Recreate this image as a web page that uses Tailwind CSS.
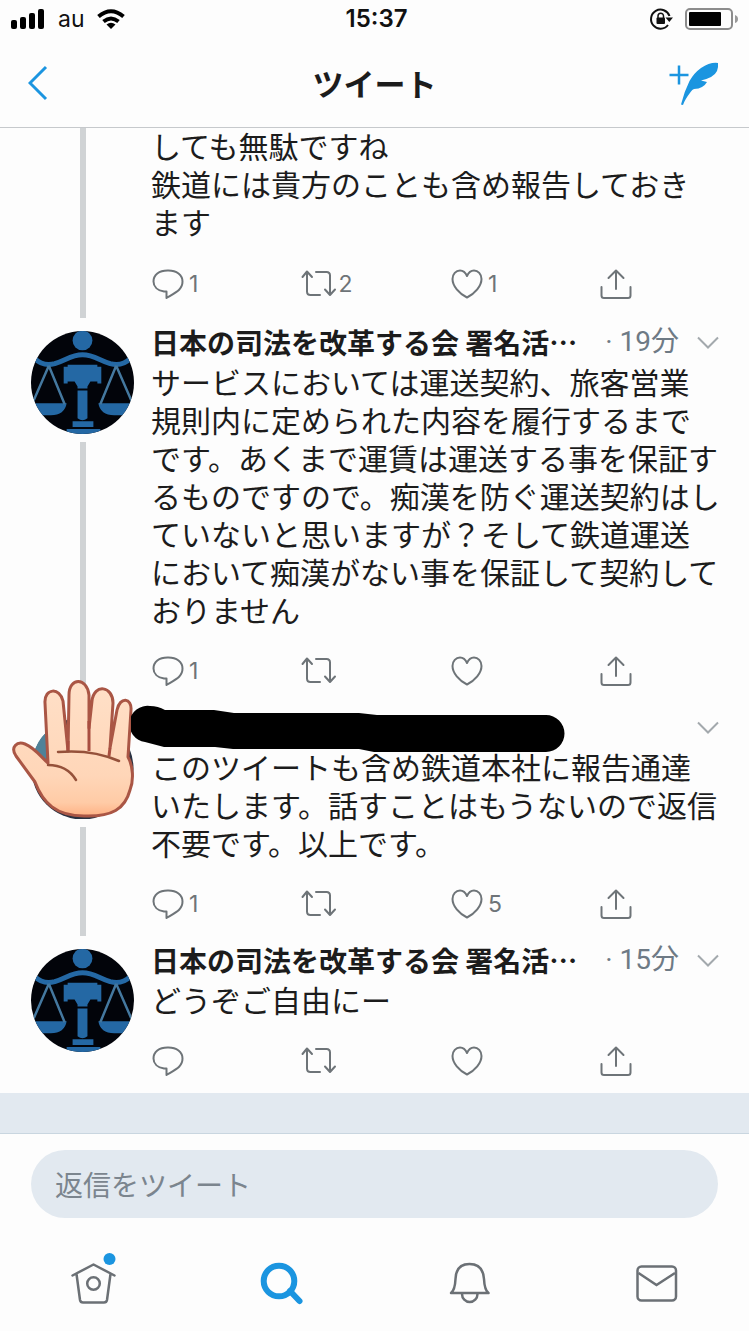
<!DOCTYPE html>
<html lang="ja">
<head>
<meta charset="utf-8">
<meta name="viewport" content="width=device-width, initial-scale=1">
<title>ツイート</title>
<script src="https://cdn.jsdelivr.net/npm/@tailwindcss/browser@4"></script>
</head>
<body class="flex min-h-screen flex-col bg-[#fdfdfd] font-['Noto_Sans_CJK_JP',sans-serif] text-[#1c1c1c]">

<!-- Shared symbols -->
<svg class="hidden" aria-hidden="true">
  <symbol id="reply" viewBox="0 0 36 32"><path d="M13 23.500C6.500 22.500 2.500 18.500 2.500 13.500 2.500 7 8 2.500 16.500 2.500h1C25.500 2.500 31.500 7 31.500 13.500c0 8-6 10.500-16 16.500v-6.500z" fill="none" stroke="currentColor" stroke-width="2" stroke-linejoin="round"/></symbol>
  <symbol id="retweet" viewBox="0 0 36 32"><path d="M1.500 9 6 3.500l5 5.500M6 4V23.500q0 3.500 3.500 3.500H19M15 4h10.500q3.500 0 3.500 3.500v19M24 21.500l5 5.500 5-5.500" fill="none" stroke="currentColor" stroke-width="2" stroke-linecap="round" stroke-linejoin="round"/></symbol>
  <symbol id="like" viewBox="0 0 36 32"><path d="M17 29.500C9 25.500 2.500 18 2.500 11 2.500 6 6 2.500 10 2.500c3 0 5.500 2 7 5.500C18.500 4.500 21 2.500 24 2.500c4 0 7.500 3.500 7.500 8.500C31.500 18 25 25.500 17 29.500z" fill="none" stroke="currentColor" stroke-width="2" stroke-linejoin="round"/></symbol>
  <symbol id="share" viewBox="0 0 36 32"><path d="M1.500 19V27.500q0 2.500 2.500 2.500h24q2.500 0 2.500-2.500V19M16 21V2.500M8.500 10 16 2.500l7.500 7.500" fill="none" stroke="currentColor" stroke-width="2" stroke-linecap="round" stroke-linejoin="round"/></symbol>
  <symbol id="chevron" viewBox="0 0 22 14"><path d="M1 2.500l10 10 10-10" fill="none" stroke="currentColor" stroke-width="2"/></symbol>
  <symbol id="scales" viewBox="0 0 104 104">
    <rect width="104" height="104" fill="#02040a"/>
    <g fill="#2468a4">
      <circle cx="52" cy="9.500" r="10"/>
      <path d="M33 36h4v-2h30v2h4v17h-4v-2h-7l-3 5v2H47v-2l-3-5h-7v2h-4zM47 60h10v28q-5 4-10 0zM42 91h21v6H42zM36 99h34v5H36z"/>
      <path d="M0 73h36q-2 12-16 12H0zM68 73h36v12H84q-14 0-16-12z"/>
    </g>
    <path d="M4 28q8 8 20 5c12-4 17-9 28-9s16 5 28 9q12 3 20-5" fill="none" stroke="#2468a4" stroke-width="5"/>
    <path d="M18 35 1 74M18 35l16 39M86 35 70 74M86 35l17 39" fill="none" stroke="#44789f" stroke-width="2.500"/>
  </symbol>
</svg>

<header class="border-b border-[#c6c9cc]">
  <div class="grid h-[38px] grid-cols-3 items-center px-3 font-[Inter,sans-serif] text-[23px] text-[#111]">
    <div class="flex items-center gap-3">
      <svg class="h-5 w-[34px] overflow-visible" viewBox="0 0 34 20" fill="#000"><rect x="-1" y="11" width="6" height="9" rx="2"/><rect x="8" y="8" width="6" height="12" rx="2"/><rect x="17" y="4" width="6" height="16" rx="2"/><rect x="26" y="0" width="6" height="20" rx="2"/></svg>
      <span>au</span>
      <svg class="h-5 w-7" viewBox="0 0 28 20" fill="none" stroke="#000" stroke-width="4"><path d="M1.500 7.500q12.500-10.500 25 0M6.500 12.500q7.500-6 15 0"/><path d="M9.500 15.500q4.500-3.500 9 0L14 20z" fill="#000" stroke="none"/></svg>
    </div>
    <time class="pl-1 text-center text-[24px] font-semibold">15:37</time>
    <div class="-mr-0.5 flex items-center justify-end gap-3">
      <svg class="h-6 w-6" viewBox="0 0 24 24"><path d="M19 18A9.500 9.500 0 1 1 20.500 9" fill="none" stroke="#111" stroke-width="2"/><path d="M16.500 10.500H24l-3.700 4.500z" fill="#111"/><rect x="7.500" y="10.500" width="8.500" height="6.500" rx="1" fill="#111"/><path d="M9 12V9a2.700 2.700 0 0 1 5.500 0V12" fill="none" stroke="#111" stroke-width="1.500"/></svg>
      <svg class="h-6 w-[54px]" viewBox="0 0 54 24"><rect x="1" y="2" width="46" height="20" rx="4" fill="none" stroke="#8c8c8c" stroke-width="2"/><rect x="4" y="5" width="32" height="14" rx="1"/><path d="M50 8q3 1 3 4t-3 4z" fill="#999"/></svg>
    </div>
  </div>
  <div class="grid h-[89px] grid-cols-[1fr_auto_1fr] items-center px-7 text-[#1b95e0]">
    <button type="button" aria-label="戻る" class="w-6"><svg class="h-9 w-5" viewBox="0 0 20 36" fill="none" stroke="currentColor" stroke-width="3"><path d="M18 2 2 18l16 16"/></svg></button>
    <h1 class="text-[31px] font-bold leading-10 text-[#1c1c1c]">ツイート</h1>
    <button type="button" aria-label="ツイートする" class="justify-self-end"><svg class="h-11 w-[52px]" viewBox="0 0 52 44"><path d="M10 4.500v19M.5 14h19" stroke="currentColor" stroke-width="2.500"/><path d="M49 2Q41 1 32 7 25 12 20.500 20 15 31 12 43.500l2 .5q1.500-5 8-13.500 1-2 3-2.500 5 0 8-2 3-1.500 5-5l-6-1.500q13-3 16-9.500 1.500-4 1-8z" fill="currentColor"/></svg></button>
  </div>
</header>

<main class="text-[30px] leading-[38px]">

  <article class="flex gap-[17px] pl-[31px]">
    <div class="flex w-[103px] shrink-0 justify-center"><div class="w-1.5 bg-[#d0d3d5]"></div></div>
    <div class="min-w-0 flex-1 pb-[18px]">
      <p class="-mt-0.5 pr-7">しても無駄ですね<br>鉄道には貴方のことも含め報告しておき<br>ます</p>
      <div class="mt-7 grid h-8 grid-cols-4 items-center font-[Inter,sans-serif] text-[23px] leading-8 text-[#6e7478]">
        <button type="button" aria-label="返信" class="flex items-center gap-0.5"><svg class="h-8 w-9"><use href="#reply"/></svg>1</button>
        <button type="button" aria-label="リツイート" class="flex items-center gap-0.5"><svg class="h-8 w-9"><use href="#retweet"/></svg>2</button>
        <button type="button" aria-label="いいね" class="flex items-center gap-0.5"><svg class="h-8 w-9"><use href="#like"/></svg>1</button>
        <button type="button" aria-label="共有" class="flex"><svg class="h-8 w-9"><use href="#share"/></svg></button>
      </div>
    </div>
  </article>

  <article class="flex gap-[17px] pl-[31px]">
    <div class="flex w-[103px] shrink-0 flex-col items-center gap-2 pt-[13px]">
      <svg class="h-[103px] w-[103px] rounded-full" role="img" aria-label="天秤のアイコン"><use href="#scales"/></svg>
      <div class="w-1.5 flex-1 bg-[#d0d3d5]"></div>
    </div>
    <div class="min-w-0 flex-1 pt-1 pb-4">
      <div class="flex h-10 items-center pr-[30px] text-[28px]">
        <h2 class="min-w-0 truncate font-bold">日本の司法を改革する会 署名活…</h2>
        <span class="ml-auto flex shrink-0 items-center font-[Roboto,'Noto_Sans_CJK_JP',sans-serif] text-[#6e7a85]"><time>· 19分</time><button type="button" aria-label="メニュー" class="ml-[18px] text-[#a3a9ad]"><svg class="h-3.5 w-[22px]"><use href="#chevron"/></svg></button></span>
      </div>
      <p class="pr-7">サービスにおいては運送契約、旅客営業<br>規則内に定められた内容を履行するまで<br>です。あくまで運賃は運送する事を保証す<br>るものですので。痴漢を防ぐ運送契約はし<br>ていないと思いますが？そして鉄道運送<br>において痴漢がない事を保証して契約して<br>おりません</p>
      <div class="mt-[27px] grid h-8 grid-cols-4 items-center font-[Inter,sans-serif] text-[23px] leading-8 text-[#6e7478]">
        <button type="button" aria-label="返信" class="flex items-center gap-0.5"><svg class="h-8 w-9"><use href="#reply"/></svg>1</button>
        <button type="button" aria-label="リツイート" class="flex"><svg class="h-8 w-9"><use href="#retweet"/></svg></button>
        <button type="button" aria-label="いいね" class="flex"><svg class="h-8 w-9"><use href="#like"/></svg></button>
        <button type="button" aria-label="共有" class="flex"><svg class="h-8 w-9"><use href="#share"/></svg></button>
      </div>
    </div>
  </article>

  <article class="flex gap-[17px] pl-[31px]">
    <div class="relative flex w-[103px] shrink-0 flex-col items-center gap-2 pt-[13px]">
      <svg class="h-[103px] w-[103px]" viewBox="0 0 104 104"><circle cx="52" cy="53" r="51.500" fill="#2b3242"/><path d="M2 40q4-15 14-24v40z" fill="#4f8299"/></svg>
      <div class="w-1.5 flex-1 bg-[#d0d3d5]"></div>
      <!-- Hand sticker over the avatar -->
      <svg class="absolute -top-8 -left-[31px] h-40 w-[150px]" viewBox="0 0 150 160" role="img" aria-label="手のひら">
        <defs><linearGradient id="skin" x1="0" y1="0" x2="0" y2="1"><stop offset="0" stop-color="#ffe0c8"/><stop offset=".7" stop-color="#ffd6b8"/><stop offset=".9" stop-color="#ffcba6"/><stop offset="1" stop-color="#ffb184"/></linearGradient></defs>
        <path d="M48 92 45 32C44 17 60 16 63 30l5 50 1-56C69 6 87 6 89 24v33L92 30C94 12 113 15 113 32l-3 45 7-38c3-14 15-12 14 0l-3 47c5 9 6 23 2 33-5 19-18 27-46 26-28 0-41-13-49-34L16 85C10 76 17 70 25 73 35 77 41 86 48 92z" fill="url(#skin)" stroke="#aa5645" stroke-width="3" stroke-linejoin="round"/>
        <path d="M89 50v30M110 77l-1 8M68 70v11" fill="none" stroke="#a94e40" stroke-width="3"/>
        <path d="M58 81q34-3 61 9M48 94q19 0 28 15" fill="none" stroke="#95513a" stroke-width="2.500" stroke-linecap="round"/>
      </svg>
    </div>
    <div class="min-w-0 flex-1 pt-1 pb-4">
      <div class="relative flex h-10 items-center justify-end pr-[30px]">
        <button type="button" aria-label="メニュー" class="flex text-[#a3a9ad]"><svg class="h-3.5 w-[22px]"><use href="#chevron"/></svg></button>
        <!-- Redacted account name -->
        <svg class="absolute -top-0.5 -left-5 h-12 w-[434px]" viewBox="0 0 434 48" aria-hidden="true"><path d="M19 1q8 0 15 4h49l20 3h125l18 2h169a18 18 0 0 1 0 37H243l-15-3H102l-18-2H33L14 37A18 18 0 0 1 19 1z"/></svg>
      </div>
      <p class="pr-7">このツイートも含め鉄道本社に報告通達<br>いたします。話すことはもうないので返信<br>不要です。以上です。</p>
      <div class="mt-[27px] grid h-8 grid-cols-4 items-center font-[Inter,sans-serif] text-[23px] leading-8 text-[#6e7478]">
        <button type="button" aria-label="返信" class="flex items-center gap-0.5"><svg class="h-8 w-9"><use href="#reply"/></svg>1</button>
        <button type="button" aria-label="リツイート" class="flex"><svg class="h-8 w-9"><use href="#retweet"/></svg></button>
        <button type="button" aria-label="いいね" class="flex items-center gap-0.5"><svg class="h-8 w-9"><use href="#like"/></svg>5</button>
        <button type="button" aria-label="共有" class="flex"><svg class="h-8 w-9"><use href="#share"/></svg></button>
      </div>
    </div>
  </article>

  <article class="flex gap-[17px] pl-[31px]">
    <div class="flex w-[103px] shrink-0 flex-col items-center pt-[13px]">
      <svg class="h-[103px] w-[103px] rounded-full" role="img" aria-label="天秤のアイコン"><use href="#scales"/></svg>
    </div>
    <div class="min-w-0 flex-1 pt-1 pb-4">
      <div class="flex h-10 items-center pr-[30px] text-[28px]">
        <h2 class="min-w-0 truncate font-bold">日本の司法を改革する会 署名活…</h2>
        <span class="ml-auto flex shrink-0 items-center font-[Roboto,'Noto_Sans_CJK_JP',sans-serif] text-[#6e7a85]"><time>· 15分</time><button type="button" aria-label="メニュー" class="ml-[18px] text-[#a3a9ad]"><svg class="h-3.5 w-[22px]"><use href="#chevron"/></svg></button></span>
      </div>
      <p class="pr-7">どうぞご自由にー</p>
      <div class="mt-[27px] grid h-8 grid-cols-4 items-center text-[#6e7478]">
        <button type="button" aria-label="返信" class="flex"><svg class="h-8 w-9"><use href="#reply"/></svg></button>
        <button type="button" aria-label="リツイート" class="flex"><svg class="h-8 w-9"><use href="#retweet"/></svg></button>
        <button type="button" aria-label="いいね" class="flex"><svg class="h-8 w-9"><use href="#like"/></svg></button>
        <button type="button" aria-label="共有" class="flex"><svg class="h-8 w-9"><use href="#share"/></svg></button>
      </div>
    </div>
  </article>
</main>

<div class="min-h-10 flex-1 border-b border-[#c9d6e0] bg-[#e2e9f0]"></div>

<footer>
  <div class="px-[31px] pt-4">
    <input type="text" aria-label="返信をツイート" placeholder="返信をツイート" class="block h-[68px] w-full rounded-full bg-[#e2e9f0] px-6 text-[28px] placeholder:text-[#7b858e]">
  </div>
  <nav class="grid h-[113px] grid-cols-4 items-center justify-items-center pt-[18px] text-[#6b7075]">
    <a href="#home" aria-label="ホーム" class="block"><svg class="h-12 w-12 overflow-visible" viewBox="0 0 48 48" fill="none" stroke="currentColor" stroke-width="2.500"><path d="M2.500 15.500 23.500 4.500l21 11M6.500 14l3.500 26q.5 2.500 3 2.500h21q2.500 0 3-2.500l3.500-26" stroke-linejoin="round" stroke-linecap="round"/><circle cx="23.500" cy="23.500" r="6.300"/><circle cx="39.500" cy="-1" r="6" fill="#1b95e0" stroke="none"/></svg></a>
    <a href="#search" aria-label="検索" class="block text-[#1b95e0]"><svg class="h-12 w-12" viewBox="0 0 48 48" fill="none" stroke="currentColor" stroke-width="6"><circle cx="22" cy="21" r="15.300"/><path d="M33 31l9.500 10" stroke-linecap="round"/></svg></a>
    <a href="#notifications" aria-label="通知" class="block"><svg class="h-12 w-12" viewBox="0 0 48 48" fill="none" stroke="currentColor" stroke-width="2.500"><path d="M7 33q4-3 4.500-14Q12 4 25.500 4T40 19q.5 11 4.500 14zM18 34a7.700 8 0 0 0 15.500 0" stroke-linejoin="round"/></svg></a>
    <a href="#messages" aria-label="メッセージ" class="block"><svg class="h-12 w-12" viewBox="0 0 48 48" fill="none" stroke="currentColor" stroke-width="2.500"><rect x="6.500" y="6.500" width="38.500" height="34" rx="4"/><path d="M7.500 13 25.500 25 44 13"/></svg></a>
  </nav>
</footer>
</body>
</html>
